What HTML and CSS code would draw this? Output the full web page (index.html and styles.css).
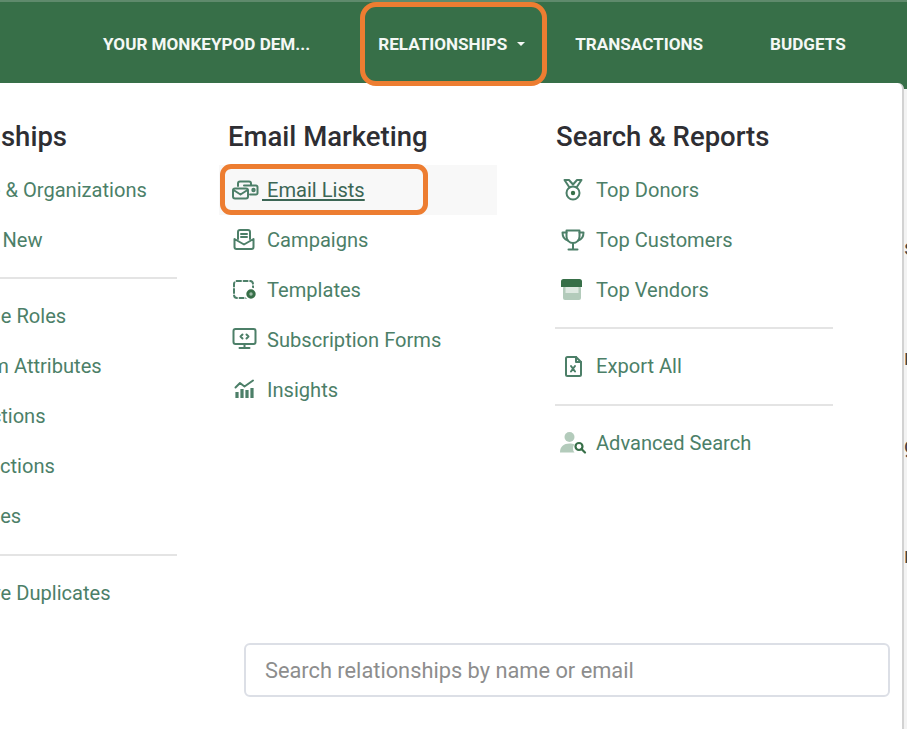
FILE: index.html
```html
<!DOCTYPE html>
<html lang="en">
<head>
    <meta charset="UTF-8">
    <meta name="viewport" content="width=device-width, initial-scale=1.0">
    <title>Relationships menu</title>
    <link rel="stylesheet" href="styles.css">
</head>
<body>
    <header class="navbar">
        <a class="nav-link org">YOUR MONKEYPOD DEM...</a>
        <a class="nav-link open">RELATIONSHIPS<span class="caret"></span></a>
        <a class="nav-link">TRANSACTIONS</a>
        <a class="nav-link">BUDGETS</a>
        <span class="callout callout-nav"></span>
    </header>

    <div class="page">
        <main class="menu">
            <div class="columns">
                <section class="col">
                    <h2>Relationships</h2>
                    <a class="item"><span class="icon"></span><span>People &amp; Organizations</span></a>
                    <a class="item"><span class="icon"></span><span>Create New</span></a>
                    <hr>
                    <a class="item"><span class="icon"></span><span>Manage Roles</span></a>
                    <a class="item"><span class="icon"></span><span>Custom Attributes</span></a>
                    <a class="item"><span class="icon"></span><span>Restrictions</span></a>
                    <a class="item"><span class="icon"></span><span>Transactions</span></a>
                    <a class="item"><span class="icon"></span><span>Activities</span></a>
                    <hr>
                    <a class="item"><span class="icon"></span><span>Remove Duplicates</span></a>
                </section>

                <section class="col">
                    <h2>Email Marketing</h2>
                    <a class="item active">
                        <svg class="icon" viewBox="0 0 28 24"><path d="M7 8V5.500A2 2 0 0 1 9 3.500h9a2 2 0 0 1 2 2V7"/><path d="M13 7.500h12a1.500 1.500 0 0 1 1.500 1.500v6a1.500 1.500 0 0 1-1.500 1.500h-6"/><rect x="2" y="10.500" width="15" height="10" rx="2"/><path d="M2.500 12l7 4.500 7-4.500"/><circle cx="22.500" cy="12" r="1.200"/></svg>
                        <span class="label">&nbsp;Email Lists</span>
                    </a>
                    <a class="item">
                        <svg class="icon" viewBox="0 0 28 24"><path d="M7 11V4a2 2 0 0 1 2-2h8a2 2 0 0 1 2 2v7"/><path d="M10 6h6M10 9h6"/><path d="M3.500 11v8a2 2 0 0 0 2 2h15a2 2 0 0 0 2-2v-8L13 16.500z"/></svg>
                        <span>Campaigns</span>
                    </a>
                    <a class="item">
                        <svg class="icon" viewBox="0 0 28 24"><rect x="3" y="3" width="19" height="17" rx="3" stroke-dasharray="4 2.600"/><circle cx="20" cy="16" r="6.500" class="knock"/><circle cx="20" cy="16" r="3.200" class="ring-heavy"/></svg>
                        <span>Templates</span>
                    </a>
                    <a class="item">
                        <svg class="icon" viewBox="0 0 28 24"><rect x="2.500" y="1" width="22" height="15" rx="2"/><path d="M13.500 16v3.500M8.500 20h10"/><path d="M11.500 6.500l-2 2 2 2M15.500 6.500l2 2-2 2"/></svg>
                        <span>Subscription Forms</span>
                    </a>
                    <a class="item">
                        <svg class="icon" viewBox="0 0 28 24"><path d="M4.500 9.500L9 5l4.500 3.500L22 2.500"/><path d="M6 14v6M11 11v9M16 12v8M21 10v10" class="thick"/></svg>
                        <span>Insights</span>
                    </a>
                </section>

                <section class="col col-reports">
                    <h2>Search &amp; Reports</h2>
                    <a class="item">
                        <svg class="icon" viewBox="0 0 28 24"><path d="M4.500 2l5 7.500M21.500 2l-5 7.500M4.500 2h4.500l4 4.500L17 2h4.500"/><circle cx="13" cy="15" r="6.500"/><circle cx="13" cy="15" r="2.200" class="fill"/></svg>
                        <span>Top Donors</span>
                    </a>
                    <a class="item">
                        <svg class="icon" viewBox="0 0 28 24"><path d="M6.500 2.500h13v6a6.500 6.500 0 0 1-13 0z"/><path d="M6.500 4.500H2.500c0 4.500 1.500 7 5.500 8M19.500 4.500h4c0 4.500-1.500 7-5.500 8"/><path d="M13 15v5.500M8.500 21.500h9"/></svg>
                        <span>Top Customers</span>
                    </a>
                    <a class="item">
                        <svg class="icon icon-flat" viewBox="0 0 28 24"><rect x="3" y="8" width="18" height="14" rx="2" class="pale"/><rect x="5.500" y="9" width="13" height="6" class="blank"/><path d="M3.500 1h16a2.500 2.500 0 0 1 2.500 2.500V9H1V3.500A2.500 2.500 0 0 1 3.500 1z" class="fill"/></svg>
                        <span>Top Vendors</span>
                    </a>
                    <hr>
                    <a class="item">
                        <svg class="icon" viewBox="0 0 28 24"><path d="M6 4.500A1.500 1.500 0 0 1 7.500 3H16l5 5v12.500a1.500 1.500 0 0 1-1.500 1.500h-12A1.500 1.500 0 0 1 6 20.500z"/><path d="M16 3v5h5"/><path d="M11 12l4 5.500M15 12l-4 5.500"/></svg>
                        <span>Export All</span>
                    </a>
                    <hr>
                    <a class="item">
                        <svg class="icon icon-flat" viewBox="0 0 28 24"><circle cx="9.500" cy="6" r="5" class="pale"/><path d="M0 21.500c0-6 4-9 9.500-9 2 0 3.500.3 5 1a6 6 0 0 0 0 8z" class="pale"/><circle cx="19" cy="15.500" r="3.500" class="ring"/><path d="M21.500 18l3.500 3.500" class="ring"/></svg>
                        <span>Advanced Search</span>
                    </a>
                </section>
            </div>

            <div class="search">
                <input type="text" placeholder="Search relationships by name or email">
            </div>

            <span class="callout callout-item"></span>
        </main>

        <aside class="peek">
            <span class="peek-s">s</span>
            <span class="peek-n1">n</span>
            <span class="peek-g">g</span>
            <span class="peek-n2">n</span>
        </aside>
    </div>
</body>
</html>
```

FILE: styles.css
```css
* { box-sizing: border-box; }
html, body { height: 100%; }
body { margin: 0; width: 907px; height: 729px; overflow: hidden; background: #fff; font-family: Roboto, "Liberation Sans", sans-serif; color: #2e2e33; position: relative; }

.navbar { height: 83px; padding: 2px 0 0 103px; background: #376f48; border-top: 2px solid #5f8a6c; display: flex; align-items: center; color: #f4f8f5; }
.nav-link { font-size: 17.100px; font-weight: 700; white-space: nowrap; margin-right: 67px; }
.nav-link.org { margin-right: 68px; }
.nav-link.open { margin-right: 50px; display: flex; align-items: center; }
.caret { width: 0; height: 0; margin-left: 10px; border: 4.500px solid transparent; border-top-color: #f4f8f5; border-bottom: 0; }

.page { display: flex; height: 646px; background: linear-gradient(#376f48 6px, #f3f3f3 6px); }
.menu { width: 904px; height: 100%; background: #fff; border-right: 2px solid #d2d2d2; border-top-right-radius: 6px; display: flex; flex-direction: column; flex-shrink: 0; }
.columns { display: flex; gap: 50px; margin-left: -101px; flex: 1; }
.col { width: 278px; flex-shrink: 0; }
.col h2 { margin: 38px 0 12px 1px; font-size: 27.500px; line-height: 32px; font-weight: 500; color: #2e2e33; white-space: nowrap; }
.col hr { margin: 12px 0; border: 0; height: 2px; background: #e4e4e4; }
.col hr:last-of-type { margin-top: 13px; }

.item { width: 278px; height: 50px; margin-left: -8px; padding-left: 12px; display: flex; align-items: center; gap: 8px; font-size: 20.100px; color: #4c7f68; white-space: nowrap; }
.item.active { background: #f8f8f8; color: #3c6655; }
.item.active .label { margin-left: -5px; text-decoration: underline; }
.col-reports .item { padding-left: 13px; }

.icon { width: 28px; height: 24px; flex-shrink: 0; fill: none; stroke: #4c7f68; stroke-width: 2; stroke-linecap: round; stroke-linejoin: round; }
.icon-flat { stroke: none; }
.icon .fill { fill: #376f48; stroke: none; }
.icon .pale { fill: #b3cbbb; stroke: none; }
.icon .blank { fill: #dfe9e2; stroke: none; }
.icon .knock { fill: #fff; stroke: none; }
.icon .thick { stroke-width: 3.200; stroke-linecap: butt; }
.icon .ring { fill: none; stroke: #376f48; stroke-width: 2.200; }
.icon .ring-heavy { fill: #9dbba8; stroke: #376f48; stroke-width: 3; }

.search { padding: 0 12px 32px 244px; }
.search input { display: block; width: 100%; height: 54px; padding: 0 19px; border: 2px solid #dcdfe6; border-radius: 6px; font-family: Roboto, "Liberation Sans", sans-serif; font-size: 21.800px; color: #333; background: #fff; outline: none; }
.search input::placeholder { color: #8d8d8d; opacity: 1; }

.peek { width: 3px; overflow: hidden; font-size: 22px; line-height: 24px; color: #444; display: flex; flex-direction: column; }
.peek span { display: block; }
.peek-s { margin-top: 153px; }
.peek-n1 { margin-top: 86px; }
.peek-g { margin-top: 64px; }
.peek-n2 { margin-top: 86px; }

/* orange annotation boxes from the screenshot */
.callout { position: absolute; border: 5px solid #ed7d31; pointer-events: none; }
.callout-nav { left: 360px; top: 2px; width: 187px; height: 84px; border-radius: 16px; }
.callout-item { left: 220px; top: 164px; width: 208px; height: 51px; border-radius: 11px; }
```
